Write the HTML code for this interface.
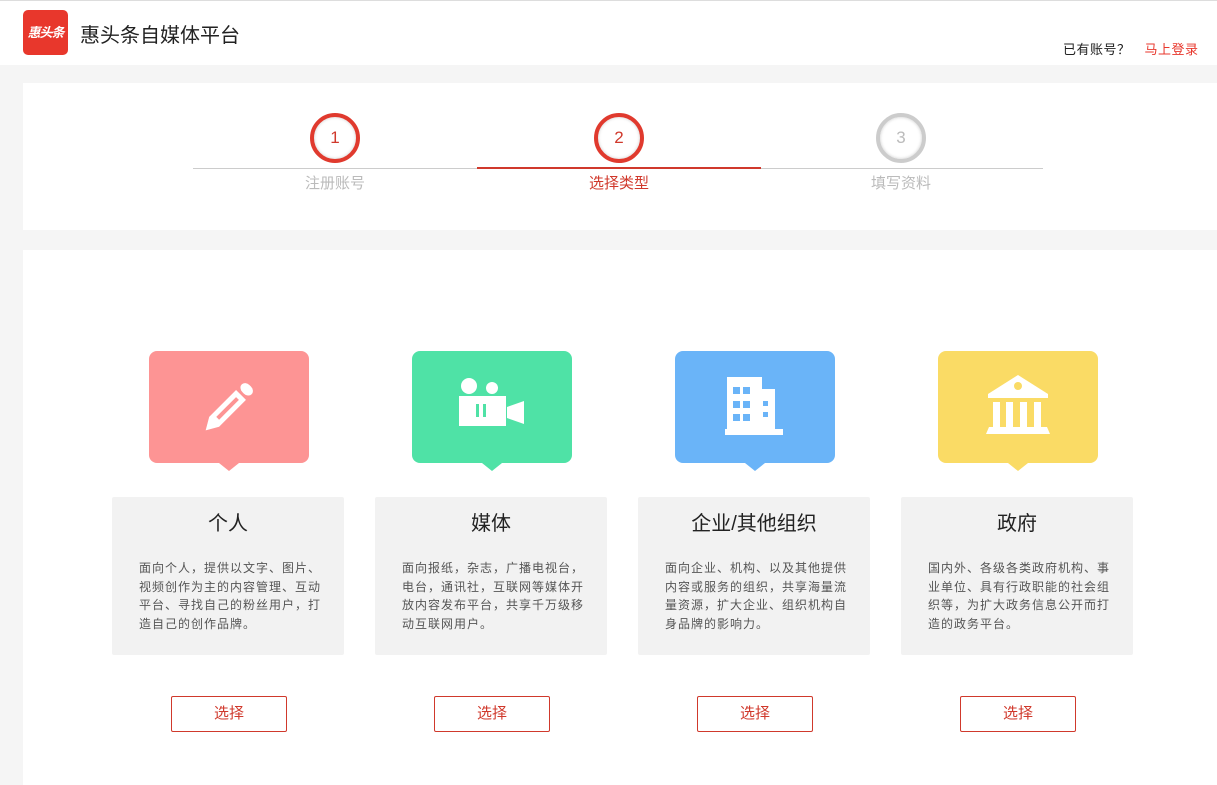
<!DOCTYPE html><html><head><meta charset="utf-8"><style>
*{margin:0;padding:0;box-sizing:border-box}
body{width:1217px;height:785px;background:#f5f5f5;font-family:"Liberation Sans","Noto Sans CJK SC",sans-serif;position:relative;overflow:hidden}
.abs{position:absolute}
.top{left:0;top:0;width:1217px;height:65px;background:#fff;border-top:1px solid #ddd}
.logo{left:23px;top:10px;width:45px;height:45px;background:#e8372c;border-radius:5px;color:#fff;font-size:13px;font-weight:bold;font-style:italic;text-align:center;line-height:45px;letter-spacing:-1px}
.title{left:80px;top:19px;font-size:20px;color:#222}
.acc{left:1063px;top:39px;font-size:13px;color:#222;letter-spacing:0.5px}
.acc span{color:#e8372c;margin-left:14px}
.p1{left:23px;top:83px;width:1194px;height:147px;background:#fff}
.p2{left:23px;top:250px;width:1194px;height:535px;background:#fff}
.line{top:168px;height:1px;background:#ccc}
.circ{width:50px;height:50px;border-radius:50%;border:4px solid #e03a2e;background:#fff;text-align:center;line-height:42px;font-size:17px;color:#d0392c;box-shadow:inset 0 0 3px #ccc}
.lbl{font-size:15px;color:#bbb;width:120px;text-align:center;top:172px}
.ib{width:160px;height:112px;border-radius:8px;top:351px}
.ib:after{content:"";position:absolute;left:70px;bottom:-8px;border-left:10px solid transparent;border-right:10px solid transparent;border-top:8px solid;border-top-color:inherit}
.gb{width:232px;height:158px;top:497px;background:#f2f2f2;border-radius:2px}
.gb h3{font-weight:normal;font-size:20px;color:#222;text-align:center;margin-top:10px}
.gb p{font-size:12px;line-height:18.5px;color:#555;padding:0 18px 0 27px;margin-top:23px;letter-spacing:1px}
.btn{width:116px;height:36px;top:696px;border:1px solid #d0392c;border-radius:2px;color:#d0392c;font-size:15px;text-align:center;line-height:34px;background:#fff}
</style></head><body>
<div class="abs top"></div>
<div class="abs logo">惠头条</div>
<div class="abs title">惠头条自媒体平台</div>
<div class="abs acc">已有账号？<span>马上登录</span></div>
<div class="abs p1"></div>
<div class="abs p2"></div>
<div class="abs line" style="left:193px;width:850px"></div>
<div class="abs line" style="left:477px;width:284px;height:2px;top:167px;background:#d0392c"></div>
<div class="abs circ" style="left:310px;top:113px">1</div>
<div class="abs circ" style="left:594px;top:113px">2</div>
<div class="abs circ" style="left:876px;top:113px;border-color:#ccc;color:#bbb">3</div>
<div class="abs lbl" style="left:275px">注册账号</div>
<div class="abs lbl" style="left:559px;color:#d0392c">选择类型</div>
<div class="abs lbl" style="left:841px">填写资料</div>

<div class="abs ib" style="left:149px;background:#fd9494;border-top-color:#fd9494"><svg width="160" height="112"><g transform="translate(80,56) rotate(45)"><rect x="-7" y="-30" width="14" height="10" rx="6" fill="#fff"/><path d="M-7,-17 h14 v38 l-7,12 l-7,-12z" fill="#fff"/><rect x="-2" y="-12" width="4" height="28" fill="#fd9494"/></g></svg></div>
<div class="abs ib" style="left:412px;background:#4fe2a6;border-top-color:#4fe2a6"><svg width="160" height="112"><circle cx="57" cy="35" r="8" fill="#fff"/><circle cx="80" cy="37" r="6" fill="#fff"/><rect x="47" y="45" width="47" height="30" fill="#fff"/><path d="M95,56 l17,-6 v23 l-17,-6z" fill="#fff"/><rect x="64" y="53" width="3" height="13" fill="#4fe2a6"/><rect x="71" y="53" width="3" height="13" fill="#4fe2a6"/></svg></div>
<div class="abs ib" style="left:675px;background:#6ab4f8;border-top-color:#6ab4f8"><svg width="160" height="112"><rect x="52" y="26" width="35" height="55" fill="#fff"/><rect x="85" y="38" width="15" height="43" fill="#fff"/><rect x="50" y="78" width="58" height="6" fill="#fff"/><g fill="#6ab4f8"><rect x="58" y="36" width="7" height="7"/><rect x="68" y="36" width="7" height="7"/><rect x="58" y="50" width="7" height="7"/><rect x="68" y="50" width="7" height="7"/><rect x="58" y="63" width="7" height="7"/><rect x="68" y="63" width="7" height="7"/><rect x="88" y="50" width="5" height="5"/><rect x="88" y="61" width="5" height="5"/></g></svg></div>
<div class="abs ib" style="left:938px;background:#fadb65;border-top-color:#fadb65"><svg width="160" height="112"><path d="M80,24 L110,43 H50z" fill="#fff"/><rect x="50" y="43" width="60" height="4" fill="#fff"/><circle cx="80" cy="35" r="4" fill="#fadb65"/><rect x="55" y="51" width="7" height="25" fill="#fff"/><rect x="68" y="51" width="7" height="25" fill="#fff"/><rect x="82" y="51" width="7" height="25" fill="#fff"/><rect x="96" y="51" width="7" height="25" fill="#fff"/><path d="M51,76 H109 L112,83 H48z" fill="#fff"/></svg></div>

<div class="abs gb" style="left:112px"><h3>个人</h3><p>面向个人，提供以文字、图片、视频创作为主的内容管理、互动平台、寻找自己的粉丝用户，打造自己的创作品牌。</p></div>
<div class="abs gb" style="left:375px"><h3>媒体</h3><p>面向报纸，杂志，广播电视台，电台，通讯社，互联网等媒体开放内容发布平台，共享千万级移动互联网用户。</p></div>
<div class="abs gb" style="left:638px"><h3>企业/其他组织</h3><p>面向企业、机构、以及其他提供内容或服务的组织，共享海量流量资源，扩大企业、组织机构自身品牌的影响力。</p></div>
<div class="abs gb" style="left:901px"><h3>政府</h3><p>国内外、各级各类政府机构、事业单位、具有行政职能的社会组织等，为扩大政务信息公开而打造的政务平台。</p></div>

<div class="abs btn" style="left:171px">选择</div>
<div class="abs btn" style="left:434px">选择</div>
<div class="abs btn" style="left:697px">选择</div>
<div class="abs btn" style="left:960px">选择</div>
</body></html>
